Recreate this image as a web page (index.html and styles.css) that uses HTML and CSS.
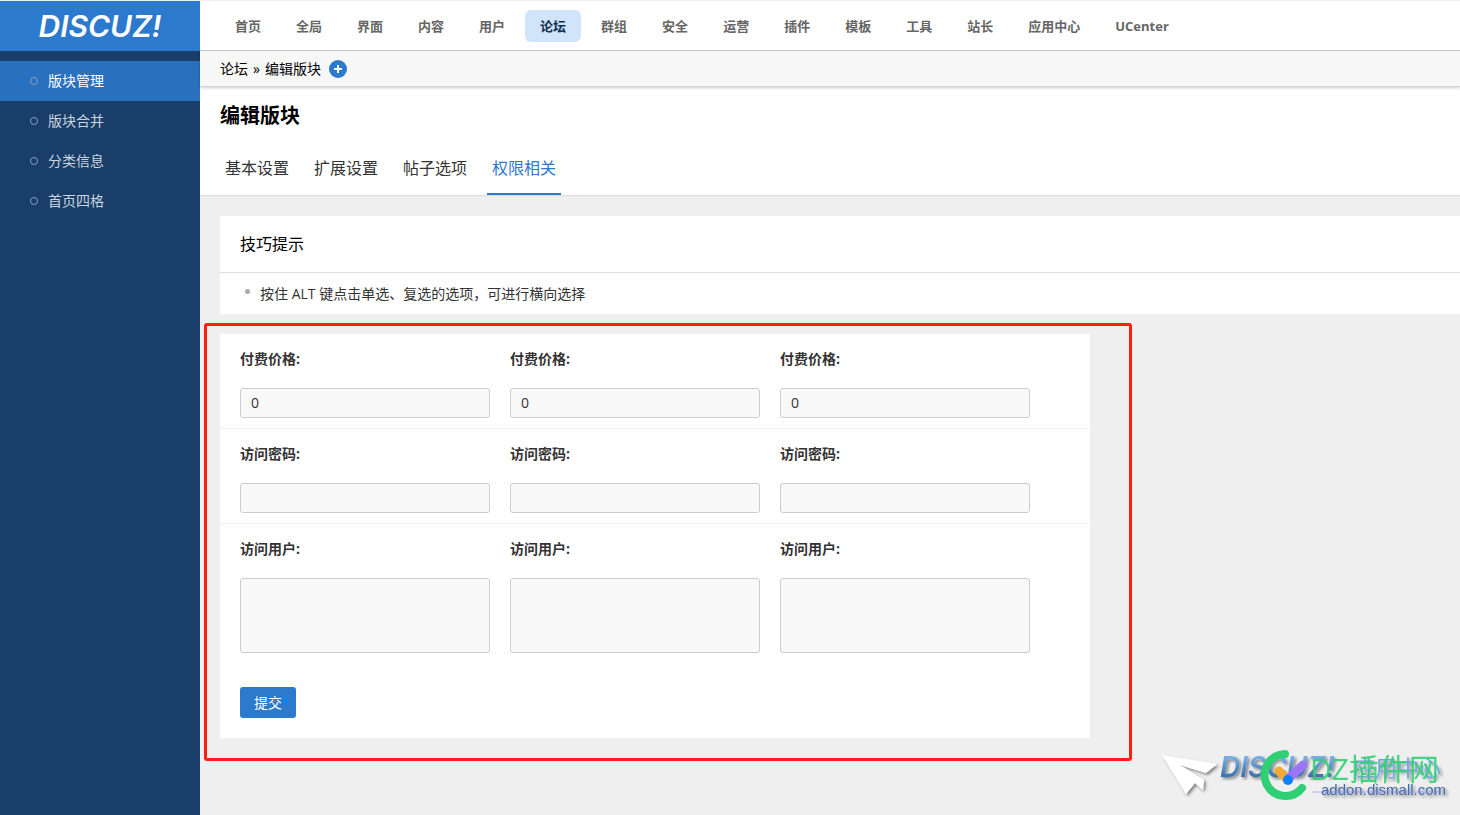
FILE: index.html
```html
<!DOCTYPE html>
<html lang="zh-CN">
<head>
<meta charset="utf-8">
<title>编辑版块</title>
<link rel="stylesheet" href="styles.css">
</head>
<body>
<div class="app">
  <aside class="sidebar">
    <a class="logo" href="#">DISCUZ!</a>
    <nav class="side-nav">
      <a class="side-link is-active" href="#">版块管理</a>
      <a class="side-link" href="#">版块合并</a>
      <a class="side-link" href="#">分类信息</a>
      <a class="side-link" href="#">首页四格</a>
    </nav>
  </aside>
  <div class="content">
    <nav class="top-nav">
      <a class="top-link" href="#">首页</a>
      <a class="top-link" href="#">全局</a>
      <a class="top-link" href="#">界面</a>
      <a class="top-link" href="#">内容</a>
      <a class="top-link" href="#">用户</a>
      <a class="top-link is-active" href="#">论坛</a>
      <a class="top-link" href="#">群组</a>
      <a class="top-link" href="#">安全</a>
      <a class="top-link" href="#">运营</a>
      <a class="top-link" href="#">插件</a>
      <a class="top-link" href="#">模板</a>
      <a class="top-link" href="#">工具</a>
      <a class="top-link" href="#">站长</a>
      <a class="top-link" href="#">应用中心</a>
      <a class="top-link" href="#">UCenter</a>
    </nav>
    <div class="crumbs">
      <div class="trail"><span>论坛</span><span>»</span><span>编辑版块</span></div>
      <button class="add" type="button" aria-label="添加">
        <svg width="18" height="18" viewBox="0 0 18 18"><circle cx="9" cy="9" r="9" fill="#2b7acd"/><path d="M9 5v8M5 9h8" stroke="#fff" stroke-width="2"/></svg>
      </button>
    </div>
    <header class="page-head">
      <h1 class="title">编辑版块</h1>
      <nav class="tabs">
        <a class="tab" href="#">基本设置</a>
        <a class="tab" href="#">扩展设置</a>
        <a class="tab" href="#">帖子选项</a>
        <a class="tab is-active" href="#">权限相关</a>
      </nav>
    </header>
    <main class="main">
      <section class="tips">
        <h2 class="tips-title">技巧提示</h2>
        <ul class="tips-list"><li class="tip">按住 ALT 键点击单选、复选的选项，可进行横向选择</li></ul>
      </section>
      <form class="form">
        <div class="row">
          <label class="field">付费价格:<input class="input" type="text" value="0"></label>
          <label class="field">付费价格:<input class="input" type="text" value="0"></label>
          <label class="field">付费价格:<input class="input" type="text" value="0"></label>
        </div>
        <div class="row">
          <label class="field">访问密码:<input class="input" type="text"></label>
          <label class="field">访问密码:<input class="input" type="text"></label>
          <label class="field">访问密码:<input class="input" type="text"></label>
        </div>
        <div class="row">
          <label class="field">访问用户:<textarea class="input area"></textarea></label>
          <label class="field">访问用户:<textarea class="input area"></textarea></label>
          <label class="field">访问用户:<textarea class="input area"></textarea></label>
        </div>
        <div class="actions"><button class="submit" type="button">提交</button></div>
        <div class="marker"></div>
      </form>
    </main>
  </div>
</div>
<svg class="watermark" width="310" height="80" viewBox="0 0 310 80">
  <defs>
    <linearGradient id="blue" x1="0" y1="0" x2="0" y2="1"><stop offset="0.2" stop-color="#78b0e6"/><stop offset="0.8" stop-color="#3b6eac"/></linearGradient>
    <filter id="shade" x="-10%" y="-20%" width="125%" height="160%"><feDropShadow dx="2" dy="2" stdDeviation="1.5" flood-color="#000" flood-opacity="0.45"/></filter>
  </defs>
  <g filter="url(#shade)">
    <path fill="#fff" d="M12 20 67 29 56 38 30 30 54 45 53 55 45 48 36 59Z"/>
    <text class="wm-logo" x="70" y="42" fill="url(#blue)">DISCUZ!</text>
    <text class="wm-center" x="203" y="41" fill="#6ea6de">应用中心</text>
    <text class="wm-url" x="171" y="60" fill="#3c6ca8">addon.dismall.com</text>
  </g>
  <path d="M163 57h128" stroke="#9b76f5" stroke-opacity="0.6"/>
  <path d="M135 19A21 21 0 1 0 152 53" fill="none" stroke="#2fd073" stroke-width="8" stroke-linecap="round"/>
  <path d="M129 36l9 9" stroke="#f3aa35" stroke-width="9" stroke-linecap="round"/>
  <path d="M138 44l15-14" stroke="#9b76f8" stroke-width="9" stroke-linecap="round"/>
  <circle cx="138" cy="45" r="5" fill="#0b80fb"/>
  <text class="wm-name" x="160" y="45" fill="#2fd073" fill-opacity="0.9">DZ插件网</text>
</svg>
</body>
</html>
```
FILE: styles.css
```css
*, *::before { box-sizing: border-box; }
body {
  margin: 0;
  background: #efefef;
  color: #333;
  font: 14px/20px "Open Sans", "Noto Sans CJK SC", sans-serif;
}
a { color: inherit; text-decoration: none; }
.app {
  display: flex;
  min-height: 100vh;
  border-top: 1px solid #eee;
}
.sidebar { flex: 0 0 200px; background: #183e69; }
.logo {
  display: flex;
  align-items: center;
  justify-content: center;
  height: 50px;
  background: #2b7acd;
  color: #fff;
  font: italic 600 30px/50px Inter, sans-serif;
}
.side-nav { padding-top: 10px; }
.side-link {
  display: flex;
  align-items: center;
  gap: 10px;
  height: 40px;
  padding-left: 30px;
  color: #cbd5df;
}
.side-link::before {
  content: "";
  width: 8px;
  height: 8px;
  border: 1px solid #8ba0b7;
  border-radius: 50%;
}
.side-link.is-active { background: #2970bf; color: #fff; }
.content { flex: 1; min-width: 0; }
.top-nav {
  display: flex;
  align-items: center;
  gap: 5px;
  height: 50px;
  padding-left: 20px;
  background: #fff;
  border-bottom: 1px solid #ccc;
}
.top-link {
  padding: 0 15px;
  border-radius: 6px;
  color: #666;
  font-size: 13px;
  font-weight: 700;
  line-height: 32px;
  white-space: nowrap;
}
.top-link.is-active { background: #d0e4fb; color: #0f2f52; }
.crumbs {
  position: relative;
  display: flex;
  align-items: center;
  gap: 8px;
  height: 36px;
  padding-left: 20px;
  background: #f7f7f7;
  border-bottom: 1px solid #d5d5d5;
  box-shadow: 0 1px 3px rgba(0, 0, 0, .2);
  color: #000;
}
.trail { display: flex; gap: 5px; }
.add { display: flex; padding: 0; border: 0; background: none; }
.page-head {
  padding: 14px 20px 0;
  background: #fff;
  border-bottom: 1px solid #ddd;
}
.title { margin: 0; color: #000; font-size: 20px; line-height: 30px; }
.tabs { display: flex; gap: 15px; padding-top: 12px; }
.tab {
  padding: 0 5px;
  border-bottom: 2px solid transparent;
  font-size: 16px;
  line-height: 50px;
}
.tab.is-active { border-color: #2b7acd; color: #2b7acd; }
.main { display: grid; gap: 20px; padding: 20px 0 20px 20px; }
.tips { background: #fff; }
.tips-title {
  margin: 0;
  padding-left: 20px;
  border-bottom: 1px solid #ddd;
  color: #000;
  font-size: 16px;
  font-weight: 400;
  line-height: 56px;
}
.tips-list { margin: 0; padding: 11px 20px 10px 25px; list-style: none; }
.tip { display: flex; gap: 10px; }
.tip::before {
  content: "";
  width: 5px;
  height: 5px;
  margin-top: 5px;
  border-radius: 50%;
  background: #aaa;
}
.form { position: relative; max-width: 870px; background: #fff; }
.row {
  display: grid;
  grid-template-columns: repeat(3, 250px);
  gap: 20px;
  padding: 15px 20px 10px;
}
.row + .row { border-top: 1px dotted #deeaf5; }
.field { display: grid; gap: 19px; font-weight: 700; }
.input {
  width: 100%;
  height: 30px;
  padding: 3px 10px 5px;
  border: 1px solid #ccc;
  border-radius: 3px;
  background: #f9f9f9;
  color: #333;
  font: inherit;
  font-weight: 400;
}
.area { height: 75px; resize: none; }
.actions { padding: 24px 20px 20px; }
.submit {
  display: block;
  padding: 0 14px;
  border: 0;
  border-radius: 3px;
  background: #2b7acd;
  color: #fff;
  font: inherit;
  line-height: 31px;
}
.marker {
  position: absolute;
  inset: -11px -42px -23px -16px;
  border: 3px solid #ff1e10;
  border-radius: 3px;
  pointer-events: none;
}
.watermark { position: fixed; right: 0; bottom: 0; pointer-events: none; }
.wm-logo { font: italic 600 28px Inter, sans-serif; }
.wm-center { font: 22px "Noto Sans CJK SC", sans-serif; }
.wm-url { font: 15px "Liberation Sans", sans-serif; }
.wm-name { font: 30px "Open Sans", "Noto Sans CJK SC", sans-serif; }
```
